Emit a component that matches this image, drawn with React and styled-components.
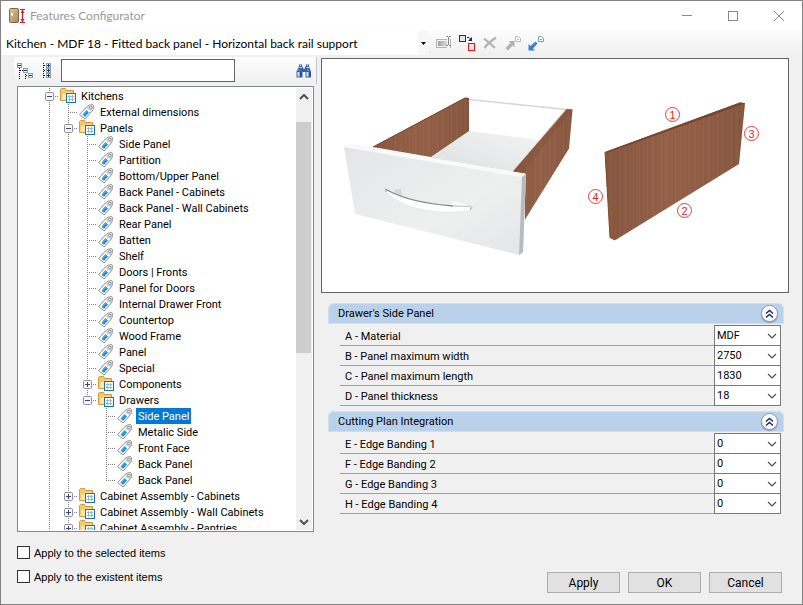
import React, { useState } from 'react';
import styled, { createGlobalStyle } from 'styled-components';

const GlobalStyle = createGlobalStyle`
  * {
    box-sizing: border-box;
  }
  body {
    margin: 0;
    font-family: Roboto, "Liberation Sans", sans-serif;
    font-size: 11px;
    color: #000;
  }
  button, input, select {
    font: inherit;
    color: inherit;
  }
`

const panels = [
  'Side Panel', 'Partition', 'Bottom/Upper Panel', 'Back Panel - Cabinets',
  'Back Panel - Wall Cabinets', 'Rear Panel', 'Batten', 'Shelf', 'Doors | Fronts',
  'Panel for Doors', 'Internal Drawer Front', 'Countertop', 'Wood Frame', 'Panel', 'Special',
];

// more: the level goes on with siblings that are not loaded yet
const tree = [
  {
    name: 'Kitchens',
    more: true,
    children: [
      { name: 'External dimensions' },
      {
        name: 'Panels',
        children: [
          ...panels.map((name) => ({ name })),
          { name: 'Components', closed: true },
          {
            name: 'Drawers',
            children: [
              { name: 'Side Panel', id: 'drawer-side' },
              { name: 'Metalic Side' },
              { name: 'Front Face' },
              { name: 'Back Panel' },
              { name: 'Back Panel' },
            ],
          },
        ],
      },
      { name: 'Cabinet Assembly - Cabinets', closed: true },
      { name: 'Cabinet Assembly - Wall Cabinets', closed: true },
      { name: 'Cabinet Assembly - Pantries', closed: true, more: true },
    ],
  },
];

const sections = [
  {
    title: "Drawer's Side Panel",
    fields: [
      ['A - Material', 'MDF'],
      ['B - Panel maximum width', '2750'],
      ['C - Panel maximum length', '1830'],
      ['D - Panel thickness', '18'],
    ],
  },
  {
    title: 'Cutting Plan Integration',
    fields: [
      ['E - Edge Banding 1', '0'],
      ['F - Edge Banding 2', '0'],
      ['G - Edge Banding 3', '0'],
      ['H - Edge Banding 4', '0'],
    ],
  },
];

// one flat row per node, guides says which parent levels still go on below
const flatten = (nodes, guides = []) =>
  nodes.flatMap((node, i) => {
    const last = i === nodes.length - 1 && !node.more;
    const row = { ...node, guides, last };
    return [row, ...(node.children ? flatten(node.children, [...guides, !last]) : [])];
  });

/* ---------- icons ---------- */

const DoorIcon = () => (
  <svg width="18" height="16" viewBox="0 0 18 16">
    <defs>
      <linearGradient id="door" x1="0" y1="0" x2="1" y2="1">
        <stop offset="0" stopColor="#dcc6a2" />
        <stop offset="1" stopColor="#a9865c" />
      </linearGradient>
    </defs>
    <rect x="0.5" y="0.5" width="9" height="14" rx="1" fill="url(#door)" stroke="#86663f" />
    <path d="M3 5v3" stroke="#fff" strokeWidth="1.5" />
    <path d="M11 1.5h5M11 14.5h5M13.5 2v12M12 4.5h3M12 11.5h3" stroke="#e0122a" strokeWidth="1.2" />
    <path d="M13.5 2l2 3h-4zM13.5 14l2-3h-4z" fill="#e0122a" />
  </svg>
)

const RenameIcon = () => (
  <svg width="16" height="16" viewBox="0 0 16 16">
    <defs>
      <linearGradient id="rename" x1="0" x2="1">
        <stop offset="0" stopColor="#a0a0a0" />
        <stop offset="1" stopColor="#dcdcdc" />
      </linearGradient>
    </defs>
    <rect x="0.5" y="4.5" width="14" height="8" fill="#f2f2f2" stroke="#b4b4b4" />
    <rect x="2" y="6" width="9" height="5" fill="url(#rename)" />
    <path d="M12.5 2v11" stroke="#f6f6f6" strokeWidth="3" />
    <path d="M10 1.5h2M13 1.5h2M12.5 2v8M10 10.5h2M13 10.5h2" stroke="#888" />
  </svg>
)

const ReplaceIcon = () => (
  <svg width="16" height="16" viewBox="0 0 16 16">
    <rect x="0.5" y="0.5" width="6" height="6" fill="#e4e4ea" stroke="#3b3030" />
    <rect x="9.5" y="8.5" width="6" height="7" fill="#dfe6ea" stroke="#f01010" />
    <path d="M8 2.5h2l2 2" stroke="#10207c" fill="none" />
    <path d="M13 2v4H9z" fill="#10207c" />
  </svg>
)

const DeleteIcon = () => (
  <svg width="16" height="16" viewBox="0 0 16 16">
    <path d="M2 3.5C5 6 9 9 13 13M14 2.5C9 6 5 9 2.5 13" stroke="#b4b4b4" strokeWidth="2.2" fill="none" />
  </svg>
)

const ArrowDocIcon = ({ flip, color, doc }) => (
  <svg width="16" height="16" viewBox="0 0 16 16">
    <path d="M10.5 1.5h3l2 2v3h-5z" fill="#f4f7fb" stroke={doc} />
    <path d="M12 4.5h2" stroke={doc} />
    {flip
      ? <path d="M0.5 15.5V9l2 2L7.5 6.5l2 2L5 13.5l2 2z" fill={color} />
      : <path d="M9.5 6v6.5l-2-2L3 15.5.5 13 5.5 8l-2-2z" fill={color} />}
  </svg>
)

const CollapseTreeIcon = () => (
  <svg width="16" height="16" viewBox="0 0 16 16">
    <path d="M2.5 5v11M8.5 9v7" stroke="#000" strokeDasharray="1 1" />
    <path d="M3 7.5h3M9 12.5h2" stroke="#000" strokeDasharray="1 1" />
    <g fill="#fff" stroke="#8c9db0">
      <rect x="0.5" y="0.5" width="4" height="4" />
      <rect x="6.5" y="5.5" width="4" height="4" />
      <rect x="11.5" y="10.5" width="4" height="4" />
    </g>
    <path d="M1 2.5h3M7 7.5h3M12 12.5h3" stroke="#123a66" />
  </svg>
)

const ExpandTreeIcon = () => (
  <svg width="10" height="16" viewBox="0 0 10 16">
    <path d="M1.5 0v16" stroke="#000" strokeDasharray="1 1" />
    <path d="M2 2.5h3M2 7.5h3M2 12.5h3" stroke="#000" strokeDasharray="1 1" />
    <g fill="#fff" stroke="#8c9db0">
      <rect x="4.5" y="0.5" width="4" height="4" />
      <rect x="4.5" y="5.5" width="4" height="4" />
      <rect x="4.5" y="10.5" width="4" height="4" />
    </g>
    <path d="M5 2.5h3M5 7.5h3M5 12.5h3M6.5 1v3M6.5 6v3M6.5 11v3" stroke="#123a66" />
  </svg>
)

const BinocularsIcon = () => (
  <svg width="16" height="14" viewBox="0 0 16 14">
    <path d="M3 0.5h3v2h1v2h2v-2h1v-2h3v2l2 5v6H9.5V8h-3v5.5H0.5v-6l2.5-5z" fill="#3d62a8" />
    <path d="M4 1.5h1M11 1.5h1M3.5 3.5h2.5M10.5 3.5H13M2.5 6h1M11.5 6h1" stroke="#cfe0f8" />
    <path d="M1.5 8h2v4.5h-2zM10.5 8h2v4.5h-2z" fill="#dbe8fb" />
    <path d="M4.5 8h1v4.5h-1zM13.5 8h1v4.5h-1z" fill="#1e3c80" />
  </svg>
)

const FolderIcon = () => (
  <svg width="18" height="16" viewBox="0 0 18 16">
    <path d="M1.5 12.5v-11l1-1h4l1 2h7v10z" fill="#f4c968" stroke="#d9993a" />
    <path d="M3 12V6h3l1-1.5h6.5V12z" fill="#fde7ac" />
    <rect x="7.5" y="5.5" width="9" height="9" fill="#fff" stroke="#0f78ad" />
    <path d="M9 8.5h6M9 11.5h6M10.5 7v6M13.5 7v6" stroke="#8fbce6" />
  </svg>
)

const TagIcon = () => (
  <svg width="18" height="16" viewBox="0 0 18 16">
    <path d="M1.5 10.5L10 1.5 14.5.5l1 1-.5 4.5-8 9z" fill="#fff" stroke="#8f8f8f" />
    <path d="M10.500 2l4-1 .5.5-.5 4-1.500 2-4.500-3.500z" fill="#d0d0d3" />
    <circle cx="12.8" cy="3.500" r="1.200" fill="#fff" stroke="#77777c" strokeWidth="0.8" />
    <path d="M4.500 10.500L8.500 6l2.500 2.500-4 4.500z" fill="#2391d2" />
    <path d="M5.500 10.500l3.500-4" stroke="#7cc3ee" strokeWidth="0.8" />
  </svg>
)

const ExpanderIcon = ({ plus }) => (
  <svg width="9" height="9" viewBox="0 0 9 9">
    <rect x="0.5" y="0.5" width="8" height="8" rx="1" fill="#f5f5f5" stroke="#919191" />
    <path d={plus ? 'M2 4.5h5M4.5 2v5' : 'M2 4.5h5'} stroke="#2b4a9b" />
  </svg>
)

const Chevron = ({ up, wide }) => (
  <svg width="10" height="6" viewBox="0 0 10 6">
    <path d={up ? 'M1 5l4-4 4 4' : 'M1 1l4 4 4-4'} fill="none" stroke="#505050" strokeWidth={wide ? 2 : 1.2} />
  </svg>
)

const DoubleChevron = () => (
  <svg width="9" height="10" viewBox="0 0 9 10">
    <path d="M1 4.5l3.5-3 3.5 3M1 8.5l3.5-3 3.5 3" fill="none" stroke="#1f2c6b" strokeWidth="1.5" />
  </svg>
)

const DrawerDrawing = () => (
  <svg width="100%" height="233" viewBox="322 59 466 233">
    <defs>
      <pattern id="grain" width="14" height="300" patternUnits="userSpaceOnUse">
        <rect width="14" height="300" fill="#926048" />
        <path d="M1.5 0v300M5.5 0v300M11.5 0v300" stroke="#8d5c45" />
        <path d="M3.5 0v300M9 0v300" stroke="#97654c" />
      </pattern>
      <linearGradient id="shade" x1="0" x2="1">
        <stop offset="0" stopColor="#5e3420" stopOpacity="0.2" />
        <stop offset="0.5" stopColor="#a06a4c" stopOpacity="0.15" />
        <stop offset="1" stopColor="#5e3420" stopOpacity="0.2" />
      </linearGradient>
      <linearGradient id="front" x1="0" y1="0" x2="1" y2="1">
        <stop offset="0" stopColor="#e4e5e6" />
        <stop offset="0.6" stopColor="#eeefef" />
        <stop offset="1" stopColor="#e4e5e6" />
      </linearGradient>
      <linearGradient id="floor" x1="1" y1="0" x2="0" y2="1">
        <stop offset="0" stopColor="#f2f3f3" />
        <stop offset="1" stopColor="#dfe0e1" />
      </linearGradient>
    </defs>

    {/* drawer box */}
    <path d="M469 131L539 140 514 172 431 158z" fill="url(#floor)" />
    <path d="M469 99.5L566 109.5" stroke="#d3d6d8" strokeWidth="1.5" />
    <path d="M373 147L465 98h4v33l-38 26z" fill="url(#grain)" />
    <path d="M373 147L465 98h4v33l-38 26z" fill="url(#shade)" />
    <path d="M373 147L465 98l4 .5" stroke="#6b3f2b" fill="none" />
    <path d="M567 109l5.5.5-3.5 39-44 71v-46l-12-2z" fill="url(#grain)" />
    <path d="M567 109l5.5.5-3.5 39-44 71v-46l-12-2z" fill="url(#shade)" />
    <path d="M513 171L566 108.5l6.5 1-5 6L523 173z" fill="#7c4b35" opacity="0.3" />

    {/* front face with its handle */}
    <path d="M344 147l6-3 176 30-3 79-4 2-164-41z" fill="url(#front)" />
    <path d="M344 147l6-3 176 30-5 3z" fill="#fafafa" />
    <path d="M522 177l4-3-3 78-4 3z" fill="#b9babd" />
    <path d="M394 190l7-1 1 8-4-1z" fill="#d4d5d6" />
    <path d="M449 205l5-5 17 6-1 3z" fill="#fbfbfb" stroke="#d9dadb" strokeWidth="0.5" />
    <path d="M386 189c20 12 50 17 85 17l1 2-2 3c-32 4-66-1-84-19z" fill="#fff" stroke="#d6d7d8" strokeWidth="0.5" />
    <path d="M386 189.5c18 10 40 14.500 67 16.500" stroke="#85878a" fill="none" strokeWidth="1.3" />
    <path d="M453 206c7 .5 13 .5 18 .5" stroke="#c6c7c9" fill="none" />
    <path d="M470 210l2-3M386 189v3" stroke="#9b9c9e" />

    {/* single side panel */}
    <path d="M605 152L740 102.5l5 .5-6 61-123.5 76-5.5-2.5z" fill="url(#grain)" />
    <path d="M605 152L740 102.5l5 .5-6 61-123.5 76-5.5-2.5z" fill="url(#shade)" />
    <path d="M605 152L740 102.5l5 1-137 49z" fill="#75462f" />
    <path d="M605 152l5 85.5 5 2.5" stroke="#7c4a33" fill="none" />

    <g fill="none" stroke="#ec3a3a">
      <circle cx="672.5" cy="114.5" r="7" />
      <circle cx="684.5" cy="210.5" r="7" />
      <circle cx="751.5" cy="133.5" r="7" />
      <circle cx="595.5" cy="196.5" r="7" />
    </g>
    <g fill="#e82020" fontFamily="Liberation Sans, sans-serif" fontSize="11" textAnchor="middle">
      <text x="672.5" y="118.5">1</text>
      <text x="684.5" y="214.5">2</text>
      <text x="751.5" y="137.5">3</text>
      <text x="595.5" y="200.5">4</text>
    </g>
  </svg>
)

function TreeView({ selected, onSelect }) {
  return (
    <TreeBox>
      <Rows role="tree">
        {flatten(tree).map((row, i) => {
          const id = row.id || `${row.name}-${i}`;
          const parent = row.children || row.closed;
          return (
            <TreeRow key={id} role="treeitem" aria-selected={id === selected}>
              {row.guides.map((on, level) => <Guide key={level} $on={on} />)}
              <Branch $last={row.last}>
                {parent && (
                  <Expander aria-label={`Toggle ${row.name}`}>
                    <ExpanderIcon plus={row.closed} />
                  </Expander>
                )}
              </Branch>
              {parent ? <FolderIcon /> : <TagIcon />}
              <NodeName $selected={id === selected} onClick={() => onSelect(id)}>{row.name}</NodeName>
            </TreeRow>
          )
        })}
      </Rows>
      <ScrollBar>
        <ScrollArrow aria-label="Scroll up"><Chevron up wide /></ScrollArrow>
        <Track><Thumb /></Track>
        <ScrollArrow aria-label="Scroll down"><Chevron wide /></ScrollArrow>
      </ScrollBar>
    </TreeBox>
  )
}

function Section({ title, fields }) {
  return (
    <section>
      <SectionHeader>
        <h2>{title}</h2>
        <RoundButton aria-label={`Collapse ${title}`}><DoubleChevron /></RoundButton>
      </SectionHeader>
      <Fields>
        {fields.map(([label, value]) => (
          <Field key={label}>
            <label htmlFor={label}>{label}</label>
            <SelectWrap>
              <select id={label} defaultValue={value}>
                <option>{value}</option>
              </select>
              <Chevron />
            </SelectWrap>
          </Field>
        ))}
      </Fields>
    </section>
  )
}

function App() {
  const [selected, setSelected] = useState('drawer-side');
  const [search, setSearch] = useState('');

  return (
    <Window>
      <GlobalStyle />
      <TitleBar>
        <DoorIcon />
        <h1>Features Configurator</h1>
        <WindowButton aria-label="Minimize">
          <svg width="10" height="10"><path d="M0 4.5h10" stroke="#8a8a8a" /></svg>
        </WindowButton>
        <WindowButton aria-label="Maximize">
          <svg width="10" height="10"><rect x="0.5" y="0.5" width="9" height="9" fill="none" stroke="#8a8a8a" /></svg>
        </WindowButton>
        <WindowButton aria-label="Close">
          <svg width="10" height="10"><path d="M0 0l10 10M10 0L0 10" stroke="#8a8a8a" /></svg>
        </WindowButton>
      </TitleBar>

      <Toolbar>
        <Combo>
          <select aria-label="Configuration">
            <option>Kitchen - MDF 18 - Fitted back panel - Horizontal back rail support</option>
          </select>
          <svg width="5" height="3"><path d="M0 0h5L2.5 3z" /></svg>
        </Combo>
        <IconButton aria-label="Rename" disabled><RenameIcon /></IconButton>
        <IconButton aria-label="Replace"><ReplaceIcon /></IconButton>
        <IconButton aria-label="Delete" disabled><DeleteIcon /></IconButton>
        <IconButton aria-label="Export" disabled><ArrowDocIcon color="#b0b0b0" doc="#bcbcbc" /></IconButton>
        <IconButton aria-label="Import"><ArrowDocIcon flip color="#3b80cf" doc="#6ea2de" /></IconButton>
      </Toolbar>

      <Main>
        <Left>
          <SearchBar>
            <IconButton aria-label="Collapse all"><CollapseTreeIcon /></IconButton>
            <IconButton aria-label="Expand all"><ExpandTreeIcon /></IconButton>
            <SearchInput aria-label="Search" value={search} onChange={(e) => setSearch(e.target.value)} />
            <IconButton aria-label="Find"><BinocularsIcon /></IconButton>
          </SearchBar>
          <TreeView selected={selected} onSelect={setSelected} />
        </Left>
        <Right>
          <Preview><DrawerDrawing /></Preview>
          <Sections>
            {sections.map((s) => <Section key={s.title} {...s} />)}
          </Sections>
        </Right>
      </Main>

      <Footer>
        <Checks>
          <Check><input type="checkbox" />Apply to the selected items</Check>
          <Check><input type="checkbox" />Apply to the existent items</Check>
        </Checks>
        <Button>Apply</Button>
        <Button>OK</Button>
        <Button>Cancel</Button>
      </Footer>
    </Window>
  )
}

export default App

const Window = styled.div`
  display: flex;
  flex-direction: column;
  height: 100vh;
  border: 1px solid #828282;
  background: #f0f0f0;
`

const TitleBar = styled.header`
  display: flex;
  align-items: center;
  height: 29px;
  flex: none;
  padding-left: 8px;
  background: #fff;
  h1{
    flex: 1;
    margin: 0 0 0 3px;
    font-family: Lato, sans-serif;
    font-size: 12px;
    font-weight: 400;
    color: #999;
  }
`

const WindowButton = styled.button`
  display: grid;
  place-items: center;
  width: 46px;
  height: 28px;
  padding: 0;
  border: none;
  background: none;
`

const Toolbar = styled.div`
  display: flex;
  align-items: center;
  gap: 7px;
  height: 26px;
  flex: none;
  padding: 0 0 0 1px;
  background: linear-gradient(#fdfdfd, #f0f0f0);
`

const Combo = styled.div`
  display: grid;
  grid-template-columns: 1fr 11px;
  align-items: center;
  justify-items: center;
  width: 427px;
  height: 24px;
  background: #f7f7f7;
  select{
    width: 100%;
    height: 24px;
    padding: 0 0 0 4px;
    border: none;
    appearance: none;
    background: #fff;
    font-family: Lato, sans-serif;
    font-size: 12px;
  }
`

const IconButton = styled.button`
  display: grid;
  place-items: center;
  min-width: 16px;
  height: 16px;
  padding: 0;
  border: none;
  background: none;
`

const Main = styled.main`
  display: flex;
  flex: 1;
  min-height: 0;
  padding: 1px 13px 0;
`

const Left = styled.div`
  display: flex;
  flex-direction: column;
  width: 303px;
  flex: none;
`

const SearchBar = styled.div`
  display: flex;
  align-items: center;
  gap: 6px;
  height: 27px;
  flex: none;
  padding: 0 4px 0 3px;
  border-right: 1px solid #c4c4c4;
  background: linear-gradient(#fdfdfd, #f0f0f0);
  > :last-child{
    margin-left: auto;
  }
`

const SearchInput = styled.input`
  width: 174px;
  height: 23px;
  padding: 0 4px;
  border: 1px solid #646464;
  background: #fff;
`

const TreeBox = styled.div`
  display: flex;
  flex: 1;
  min-height: 0;
  margin: 2px 3px 0;
  padding: 1px;
  border: 1px solid #828790;
  background: #fff;
  overflow: hidden;
`

const Rows = styled.ul`
  flex: 1;
  min-width: 0;
  margin: 0;
  padding: 0 0 0 21px;
  overflow: hidden;
  list-style: none;
`

const TreeRow = styled.li`
  display: flex;
  height: 16px;
  white-space: nowrap;
  svg{
    flex: none;
  }
`

const Guide = styled.span`
  width: 19px;
  flex: none;
  background: ${({ $on }) => $on
    ? 'repeating-linear-gradient(#808080 0 1px, transparent 1px 2px) 9px 0 / 1px 16px no-repeat'
    : 'none'};
`

const Branch = styled.span`
  width: 19px;
  flex: none;
  padding: 4px 5px;
  background:
    repeating-linear-gradient(#808080 0 1px, transparent 1px 2px) 9px 0 / 1px ${({ $last }) => $last ? 8 : 16}px no-repeat,
    repeating-linear-gradient(90deg, #808080 0 1px, transparent 1px 2px) 9px 8px / 10px 1px no-repeat;
`

const Expander = styled.button`
  display: block;
  width: 9px;
  height: 9px;
  padding: 0;
  border: none;
  background: none;
  svg{
    display: block;
  }
`

const NodeName = styled.span`
  margin-left: 2px;
  padding: 0 2px;
  line-height: 18px;
  color: ${({ $selected }) => $selected ? '#fff' : '#000'};
  background: ${({ $selected }) => $selected ? '#0078d7' : 'none'};
`

const ScrollBar = styled.div`
  display: flex;
  flex-direction: column;
  width: 16px;
  background: #f0f0f0;
`

const ScrollArrow = styled.button`
  display: grid;
  place-items: center;
  height: 17px;
  flex: none;
  padding: 0;
  border: none;
  background: none;
`

const Track = styled.div`
  flex: 1;
  padding: 17px 1px 0 0;
`

const Thumb = styled.div`
  height: 59%;
  background: #cdcdcd;
`

const Right = styled.div`
  flex: 1;
  min-width: 0;
  margin: 1px 0 0 4px;
`

const Preview = styled.div`
  border: 1px solid #646464;
  background: #fff;
  svg{
    display: block;
  }
`

const Sections = styled.div`
  display: flex;
  flex-direction: column;
  gap: 5px;
  padding: 10px 5px 0 7px;
`

const SectionHeader = styled.header`
  display: flex;
  align-items: center;
  justify-content: space-between;
  height: 21px;
  padding: 0 5px 0 9px;
  border: 1px solid #cddff0;
  border-radius: 6px 6px 0 0;
  background: #b9d1ea;
  h2{
    margin: 0;
    font-size: 11px;
    font-weight: 400;
  }
`

const RoundButton = styled.button`
  display: grid;
  place-items: center;
  width: 17px;
  height: 17px;
  padding: 0;
  border: 1px solid #8d9bb5;
  border-radius: 50%;
  background: #fff;
  box-shadow: 0 1px 1px #8794ab;
`

const Fields = styled.div`
  padding: 2px 3px 0 12px;
`

const Field = styled.div`
  display: flex;
  height: 20px;
  label{
    flex: 1;
    padding-left: 5px;
    border-bottom: 1px solid #a0a0a0;
    line-height: 22px;
  }
`

const SelectWrap = styled.div`
  display: grid;
  grid-template-columns: 1fr 13px;
  align-items: center;
  width: 67px;
  height: 21px;
  margin-top: -1px;
  border: 1px solid #7a7a7a;
  background: #fff;
  select{
    grid-area: 1 / 1 / 2 / 3;
    width: 100%;
    height: 19px;
    padding: 0 0 0 2px;
    border: none;
    appearance: none;
    background: none;
  }
  svg{
    grid-area: 1 / 2;
    pointer-events: none;
  }
`

const Footer = styled.footer`
  display: flex;
  align-items: flex-end;
  gap: 8px;
  flex: none;
  padding: 14px 20px 11px 16px;
`

const Checks = styled.div`
  display: grid;
  gap: 11px;
  flex: 1;
  padding-bottom: 10px;
`

const Check = styled.label`
  display: flex;
  align-items: center;
  gap: 4px;
  height: 13px;
  font-family: "Liberation Sans", Arial, sans-serif;
  input{
    width: 13px;
    height: 13px;
    margin: 0;
    border: 1px solid #333;
    appearance: none;
    background: #fff;
  }
  input:checked{
    background: #0078d7;
  }
`

const Button = styled.button`
  width: 73px;
  height: 21px;
  padding: 0;
  border: 1px solid #adadad;
  background: #e1e1e1;
  font-size: 12px;
`
